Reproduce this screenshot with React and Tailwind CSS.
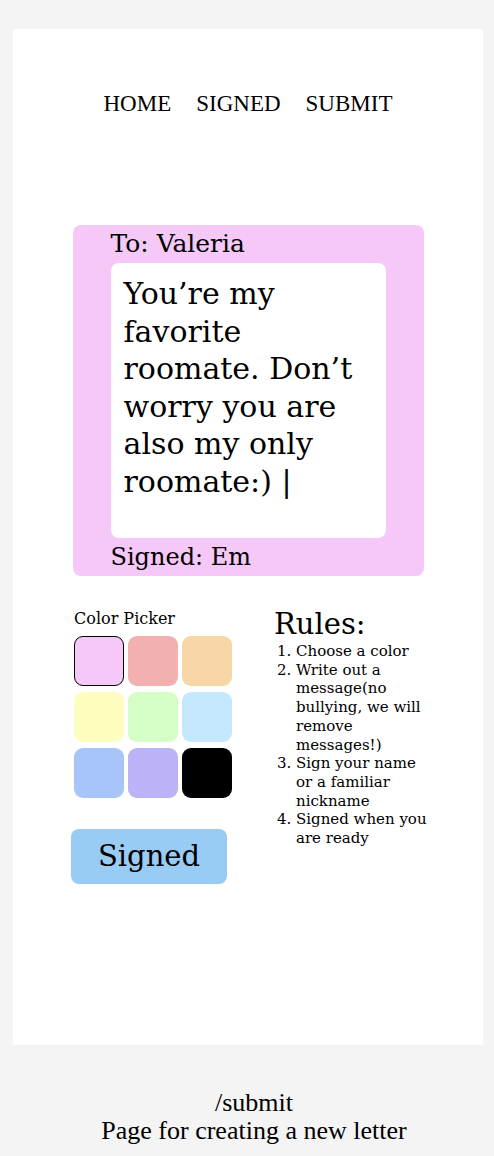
const SWATCHES = [
  '#f5c8f8', '#f2b1b0', '#f7d6a8',
  '#fdfdc0', '#d5fdc6', '#c6e8fd',
  '#a7c5f9', '#bab3f8', '#000000',
];

const serif = "font-['DejaVu_Serif',serif]";

export default function App() {
  return (
    <div className="min-h-[1156px] bg-[#f4f4f4] pt-[29px] text-black">
      <div className="mx-[13px] h-[1016px] w-[470px] bg-white">
        {/* Nav */}
        <nav className="flex justify-center gap-[25px] pt-[61px] font-['Liberation_Serif',serif] text-[23px] leading-[28px]">
          <a>HOME</a>
          <a>SIGNED</a>
          <a>SUBMIT</a>
        </nav>

        {/* Letter */}
        <div className={`mx-auto mt-[107px] w-[351px] rounded-[8px] bg-[#f5c8f8] px-[38px] ${serif}`}>
          <div className="h-[38px] text-[25px] leading-[38px]">To: Valeria</div>
          <div className="h-[275px] rounded-[8px] bg-white px-[13px] pt-[12px] text-[30px] leading-[37.5px]">
            You’re my favorite roomate. Don’t worry you are also my only roomate:) |
          </div>
          <div className="h-[38px] text-[24px] leading-[38px]">Signed: Em</div>
        </div>

        {/* Picker + rules */}
        <div className={`mt-[30px] flex pl-[61px] ${serif}`}>
          <div className="w-[200px]">
            <div className="text-[16px] leading-[26px]">Color Picker</div>
            <div className="mt-[4px] grid w-[158px] grid-cols-[50px_50px_50px] gap-x-[4px] gap-y-[6px]">
              {SWATCHES.map((c, i) => (
                <div
                  key={c}
                  className={`h-[50px] w-[50px] rounded-[9px] ${i === 0 ? 'border border-black' : ''}`}
                  style={{ backgroundColor: c }}
                />
              ))}
            </div>
            <button className="ml-[-3px] mt-[31px] flex h-[55px] w-[156px] items-center justify-center rounded-[8px] bg-[#99ccf5] text-[29px]">
              Signed
            </button>
          </div>

          <div className="w-[165px]">
            <div className="text-[29px] leading-[36px]">Rules:</div>
            <ol className="ml-[22px] w-[134px] list-decimal text-[15px] leading-[18.7px]">
              <li>Choose a color</li>
              <li>Write out a message(no bullying, we will remove messages!)</li>
              <li>Sign your name or a familiar nickname</li>
              <li>Signed when you are ready</li>
            </ol>
          </div>
        </div>
      </div>

      {/* Footer caption */}
      <div className="mt-[44px] pl-[14px] text-center font-['Liberation_Serif',serif] text-[26px] leading-[28px]">
        <div>/submit</div>
        <div>Page for creating a new letter</div>
      </div>
    </div>
  );
}
